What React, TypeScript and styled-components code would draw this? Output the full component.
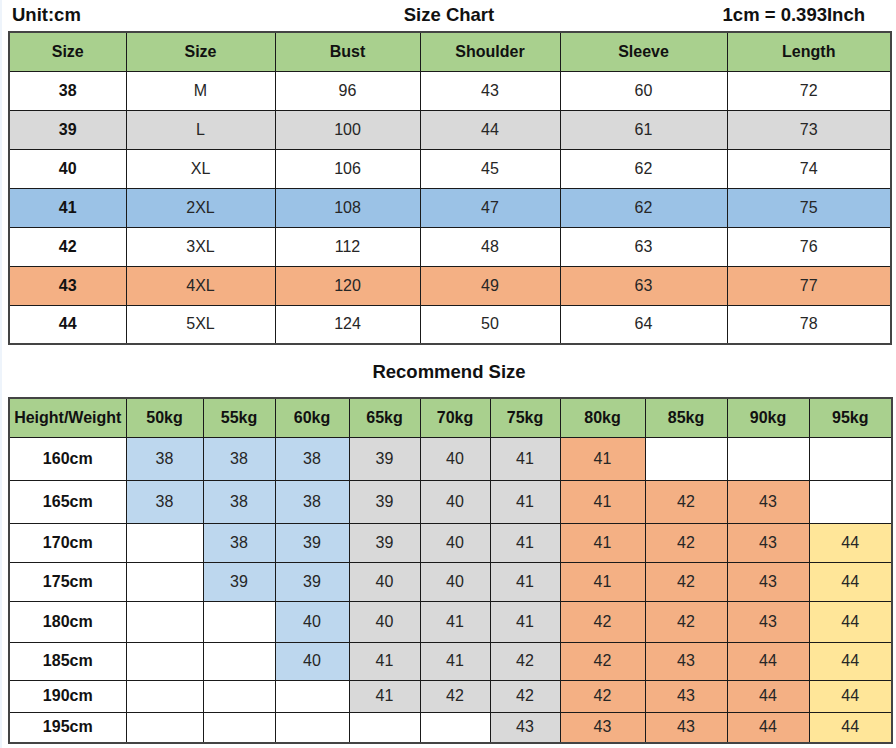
import React from "react";
import styled, { createGlobalStyle } from "styled-components";

const GlobalStyle = createGlobalStyle`
  html, body {
    margin: 0;
    padding: 0;
    background: #ffffff;
  }
  body {
    font-family: "Liberation Sans", Arial, sans-serif;
    color: #1a1a1a;
  }
`;

const Page = styled.div`
  width: 896px;
  height: 748px;
  padding: 0 6px 0 6px;
  box-sizing: border-box;
  overflow: hidden;
  border-left: 2px solid #eef4fb;
`;

const TopBar = styled.div`
  display: grid;
  grid-template-columns: 1fr auto 1fr;
  align-items: center;
  height: 30px;
  margin-bottom: 1px;
  width: 882px;
  font-size: 18.5px;
  font-weight: bold;
  color: #111;
`;

const Left = styled.div`
  padding-left: 4px;
`;

const Right = styled.div`
  text-align: right;
  padding-right: 25px;
`;

const Caption = styled.div`
  height: 52px;
  width: 882px;
  display: flex;
  align-items: center;
  justify-content: center;
  font-size: 18.5px;
  font-weight: bold;
  color: #111;
  padding-top: 1px;
  box-sizing: border-box;
`;

const Table = styled.table`
  width: 883px;
  border-collapse: collapse;
  table-layout: fixed;
  border: 2px solid #444;
`;

type Tone = "green" | "gray" | "blue" | "lblue" | "orange" | "yellow" | "white";

const tones: Record<Tone, string> = {
  green: "#a9d08e",
  gray: "#d9d9d9",
  blue: "#9bc2e6",
  lblue: "#bdd7ee",
  orange: "#f4b084",
  yellow: "#ffe699",
  white: "#ffffff",
};

const Row = styled.tr<{ $h: number }>`
  height: ${(p) => p.$h}px;
`;

const Cell = styled.td<{ $tone: Tone; $bold?: boolean }>`
  border: 1px solid #1a1a1a;
  background: ${(p) => tones[p.$tone]};
  text-align: center;
  vertical-align: middle;
  font-size: 16px;
  font-weight: ${(p) => (p.$bold ? "bold" : "normal")};
  color: ${(p) => (p.$bold ? "#111" : "#262626")};
  padding: 0;
  white-space: nowrap;
`;

const sizeCols = [117, 149, 145, 140, 167, 164];
const sizeHead = ["Size", "Size", "Bust", "Shoulder", "Sleeve", "Length"];
const sizeRows: { tone: Tone; v: string[] }[] = [
  { tone: "white", v: ["38", "M", "96", "43", "60", "72"] },
  { tone: "gray", v: ["39", "L", "100", "44", "61", "73"] },
  { tone: "white", v: ["40", "XL", "106", "45", "62", "74"] },
  { tone: "blue", v: ["41", "2XL", "108", "47", "62", "75"] },
  { tone: "white", v: ["42", "3XL", "112", "48", "63", "76"] },
  { tone: "orange", v: ["43", "4XL", "120", "49", "63", "77"] },
  { tone: "white", v: ["44", "5XL", "124", "50", "64", "78"] },
];

const recCols = [117, 77, 72, 74, 71, 70, 70, 85, 82, 82, 83];
const recHead = [
  "Height/Weight",
  "50kg",
  "55kg",
  "60kg",
  "65kg",
  "70kg",
  "75kg",
  "80kg",
  "85kg",
  "90kg",
  "95kg",
];

// b = light blue, g = gray, o = orange, y = yellow, - = empty
const recRows: { h: string; height: number; cells: string[] }[] = [
  { h: "160cm", height: 43, cells: ["b38", "b38", "b38", "g39", "g40", "g41", "o41", "-", "-", "-"] },
  { h: "165cm", height: 43, cells: ["b38", "b38", "b38", "g39", "g40", "g41", "o41", "o42", "o43", "-"] },
  { h: "170cm", height: 39, cells: ["-", "b38", "b39", "g39", "g40", "g41", "o41", "o42", "o43", "y44"] },
  { h: "175cm", height: 39, cells: ["-", "b39", "b39", "g40", "g40", "g41", "o41", "o42", "o43", "y44"] },
  { h: "180cm", height: 41, cells: ["-", "-", "b40", "g40", "g41", "g41", "o42", "o42", "o43", "y44"] },
  { h: "185cm", height: 38, cells: ["-", "-", "b40", "g41", "g41", "g42", "o42", "o43", "o44", "y44"] },
  { h: "190cm", height: 32, cells: ["-", "-", "-", "g41", "g42", "g42", "o42", "o43", "o44", "y44"] },
  { h: "195cm", height: 31, cells: ["-", "-", "-", "-", "-", "g43", "o43", "o43", "o44", "y44"] },
];

const toneOf = (c: string): Tone =>
  c[0] === "b" ? "lblue" : c[0] === "g" ? "gray" : c[0] === "o" ? "orange" : c[0] === "y" ? "yellow" : "white";

function App() {
  return (
    <Page>
      <GlobalStyle />
      <TopBar>
        <Left>Unit:cm</Left>
        <div>Size Chart</div>
        <Right>1cm = 0.393Inch</Right>
      </TopBar>

      <Table>
        <colgroup>
          {sizeCols.map((w, i) => (
            <col key={i} style={{ width: w }} />
          ))}
        </colgroup>
        <tbody>
          <Row $h={39}>
            {sizeHead.map((t, i) => (
              <Cell key={i} $tone="green" $bold>
                {t}
              </Cell>
            ))}
          </Row>
          {sizeRows.map((r) => (
            <Row $h={39} key={r.v[0]}>
              {r.v.map((t, i) => (
                <Cell key={i} $tone={r.tone} $bold={i === 0}>
                  {t}
                </Cell>
              ))}
            </Row>
          ))}
        </tbody>
      </Table>

      <Caption>Recommend Size</Caption>

      <Table>
        <colgroup>
          {recCols.map((w, i) => (
            <col key={i} style={{ width: w }} />
          ))}
        </colgroup>
        <tbody>
          <Row $h={39}>
            {recHead.map((t, i) => (
              <Cell key={i} $tone="green" $bold>
                {t}
              </Cell>
            ))}
          </Row>
          {recRows.map((r) => (
            <Row $h={r.height} key={r.h}>
              <Cell $tone="white" $bold>
                {r.h}
              </Cell>
              {r.cells.map((c, i) => (
                <Cell key={i} $tone={toneOf(c)}>
                  {c === "-" ? "" : c.slice(1)}
                </Cell>
              ))}
            </Row>
          ))}
        </tbody>
      </Table>
    </Page>
  );
}

export default App;
